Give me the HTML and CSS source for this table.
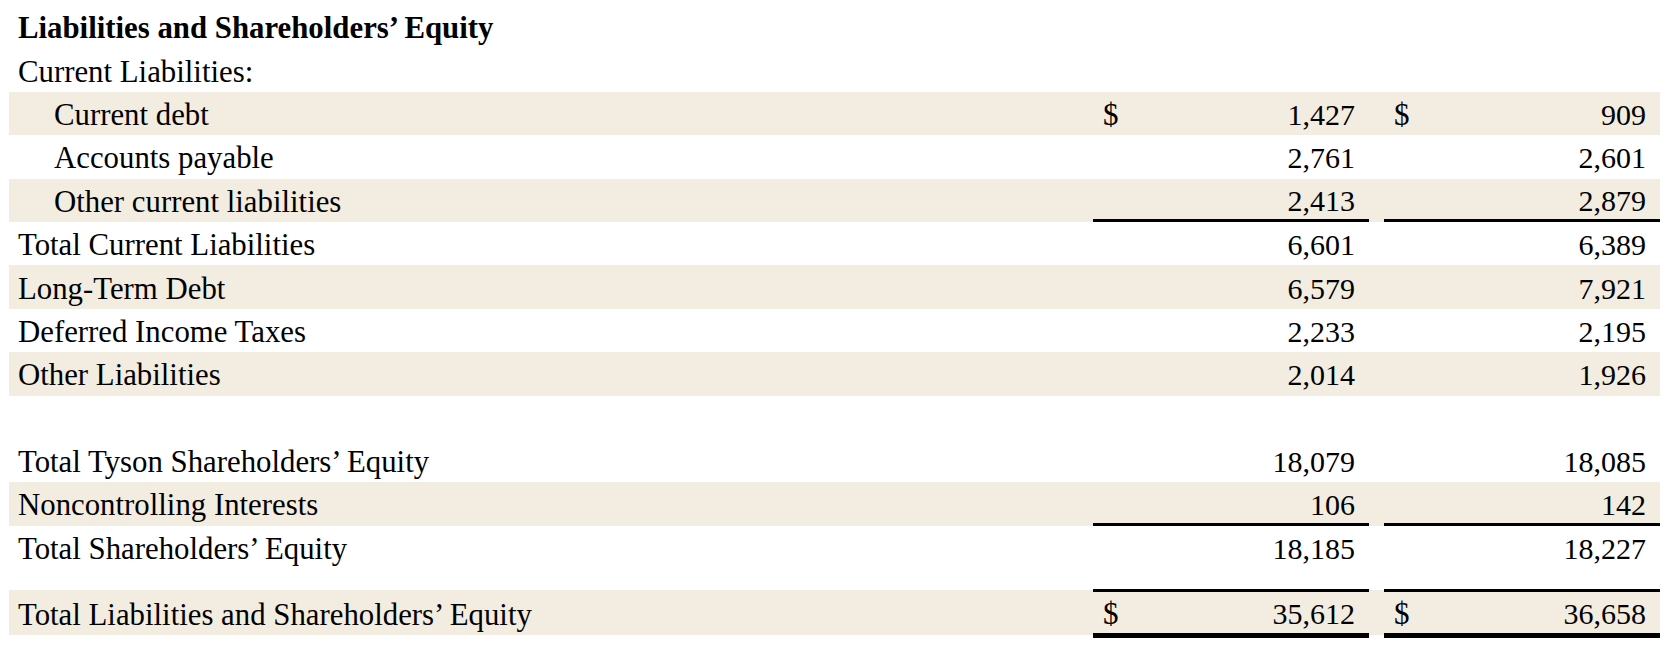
FILE: index.html
```html
<!DOCTYPE html>
<html>
<head>
<meta charset="utf-8">
<link rel="stylesheet" href="styles.css">
</head>
<body>
<div class="sheet">
  <div class="row"><div class="label title">Liabilities and Shareholders’ Equity</div></div>
  <div class="row"><div class="label">Current Liabilities:</div></div>
  <div class="row band">
    <div class="label indent">Current debt</div>
    <div class="val"><span class="cur">$</span><span>1,427</span></div><div></div>
    <div class="val"><span class="cur">$</span><span>909</span></div>
  </div>
  <div class="row">
    <div class="label indent">Accounts payable</div>
    <div class="val"><span></span><span>2,761</span></div><div></div>
    <div class="val"><span></span><span>2,601</span></div>
  </div>
  <div class="row band">
    <div class="label indent">Other current liabilities</div>
    <div class="val under"><span></span><span>2,413</span></div><div></div>
    <div class="val under"><span></span><span>2,879</span></div>
  </div>
  <div class="row">
    <div class="label">Total Current Liabilities</div>
    <div class="val"><span></span><span>6,601</span></div><div></div>
    <div class="val"><span></span><span>6,389</span></div>
  </div>
  <div class="row band">
    <div class="label">Long-Term Debt</div>
    <div class="val"><span></span><span>6,579</span></div><div></div>
    <div class="val"><span></span><span>7,921</span></div>
  </div>
  <div class="row">
    <div class="label">Deferred Income Taxes</div>
    <div class="val"><span></span><span>2,233</span></div><div></div>
    <div class="val"><span></span><span>2,195</span></div>
  </div>
  <div class="row band">
    <div class="label">Other Liabilities</div>
    <div class="val"><span></span><span>2,014</span></div><div></div>
    <div class="val"><span></span><span>1,926</span></div>
  </div>
  <div class="row"></div>
  <div class="row">
    <div class="label">Total Tyson Shareholders’ Equity</div>
    <div class="val"><span></span><span>18,079</span></div><div></div>
    <div class="val"><span></span><span>18,085</span></div>
  </div>
  <div class="row band">
    <div class="label">Noncontrolling Interests</div>
    <div class="val under"><span></span><span>106</span></div><div></div>
    <div class="val under"><span></span><span>142</span></div>
  </div>
  <div class="row">
    <div class="label">Total Shareholders’ Equity</div>
    <div class="val"><span></span><span>18,185</span></div><div></div>
    <div class="val"><span></span><span>18,227</span></div>
  </div>
  <div class="spacer"></div>
  <div class="row total">
    <div class="label">Total Liabilities and Shareholders’ Equity</div>
    <div class="val grand"><span class="cur">$</span><span>35,612</span></div><div></div>
    <div class="val grand"><span class="cur">$</span><span>36,658</span></div>
  </div>
</div>
</body>
</html>
```
FILE: styles.css
```css
html, body {
  margin: 0;
  padding: 0;
  background: #ffffff;
}
body {
  font-family: "Liberation Serif", "Times New Roman", serif;
  font-size: 30px;
  color: #000000;
}
.sheet {
  width: 1651px;
  padding: 5px 14px 0 9px;
}
.row {
  display: grid;
  grid-template-columns: 1084px 276px 15px 276px;
  height: 43.4px;
  align-items: center;
}
.band {
  background: #f2ece1;
}
.label {
  padding-left: 9px;
  padding-top: 4px;
  white-space: nowrap;
  font-size: 30.8px;
}
.indent {
  padding-left: 45px;
}
.title {
  font-weight: bold;
}
.val {
  display: flex;
  justify-content: space-between;
  align-items: center;
  padding: 3px 14px 0 10px;
  height: 100%;
  box-sizing: border-box;
}
.cur {
  font-size: 31px;
}
.under {
  border-bottom: 3px solid #000;
  padding-top: 5px;
}
.spacer {
  height: 20px;
}
.total {
  height: 49px;
  background: linear-gradient(to bottom, transparent 1px, #f2ece1 1px, #f2ece1 46px, transparent 46px);
}
.grand {
  border-top: 3px solid #000;
  border-bottom: 5px solid #000;
  background: #f2ece1;
}
```
